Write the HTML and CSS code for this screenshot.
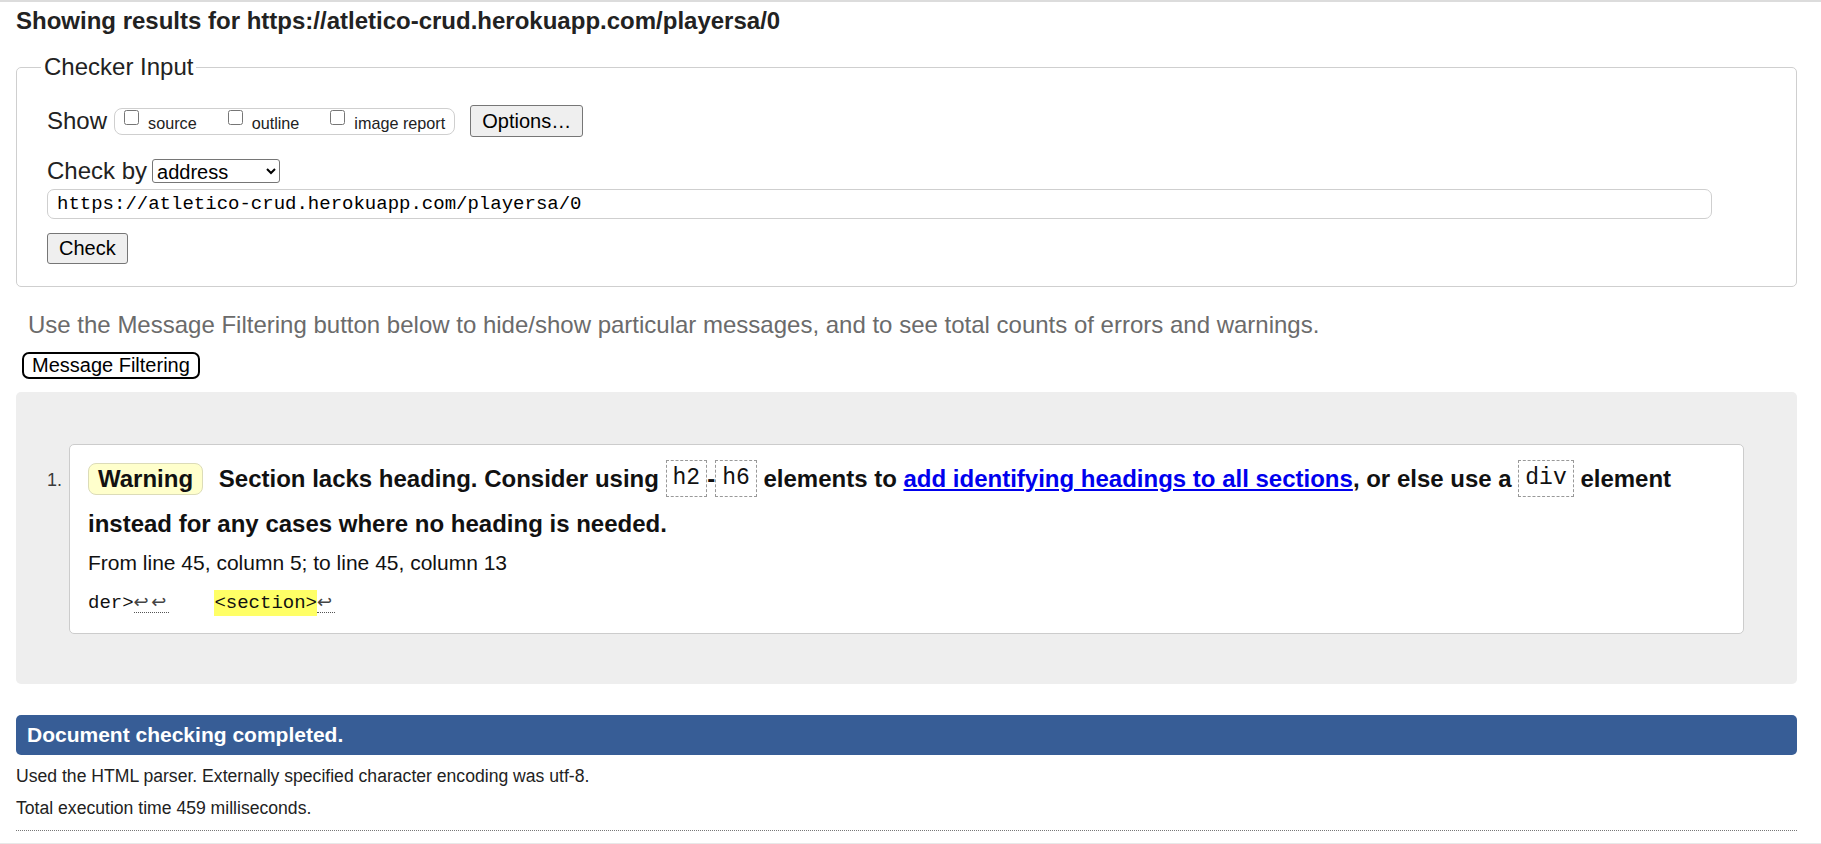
FILE: index.html
```html
<!DOCTYPE html>
<html lang="en">
<head>
<meta charset="utf-8">
<title>Showing results for https://atletico-crud.herokuapp.com/playersa/0 - Nu Html Checker</title>
<link rel="stylesheet" href="styles.css">
</head>
<body>
<div class="topline"></div>
<main class="page">
  <h2 class="results-title">Showing results for https://atletico-crud.herokuapp.com/playersa/0</h2>

  <fieldset class="checker">
    <legend>Checker Input</legend>
    <div class="row show-row">
      <span class="lbl">Show</span>
      <span class="opts">
        <label class="opt"><input type="checkbox"><span>source</span></label>
        <label class="opt"><input type="checkbox"><span>outline</span></label>
        <label class="opt last"><input type="checkbox"><span>image report</span></label>
      </span>
      <button class="btn options" type="button">Options…</button>
    </div>
    <div class="row by-row">
      <span class="lbl">Check by</span>
      <select class="by"><option>address</option></select>
    </div>
    <input class="url" type="text" value="https://atletico-crud.herokuapp.com/playersa/0">
    <button class="btn check" type="button">Check</button>
  </fieldset>

  <p class="hint">Use the Message Filtering button below to hide/show particular messages, and to see total counts of errors and warnings.</p>
  <button class="filter" type="button">Message Filtering</button>

  <div class="results-box">
    <ol class="messages">
      <li class="message">
        <span class="num">1.</span>
        <div class="card">
          <p class="msg"><span class="badge">Warning</span> Section lacks heading. Consider using <code>h2</code>-<code>h6</code> elements to <a href="#">add identifying headings to all sections</a>, or else use a <code>div</code> element instead for any cases where no heading is needed.</p>
          <p class="loc">From line 45, column 5; to line 45, column 13</p>
          <p class="extract"><span>der&gt;</span><span class="lf">↩↩</span>    <mark>&lt;section&gt;</mark><span class="lf">↩</span></p>
        </div>
      </li>
    </ol>
  </div>

  <div class="done">Document checking completed.</div>
  <p class="info">Used the HTML parser. Externally specified character encoding was utf-8.</p>
  <p class="info second">Total execution time 459 milliseconds.</p>
  <div class="dotted"></div>
</main>
<div class="footline"></div>
</body>
</html>
```

FILE: styles.css
```css
* { box-sizing: border-box; }

html, body {
  margin: 0;
  padding: 0;
  background: #fff;
}

body {
  font-family: "Liberation Sans", Arial, sans-serif;
  color: #222;
  overflow: hidden;
}

.topline {
  height: 2px;
  background: #dcdcdc;
}

.page {
  padding: 0 24px 0 16px;
}

.results-title {
  margin: 5px 0 0;
  font-size: 24px;
  line-height: 28px;
  font-weight: bold;
  color: #222;
}

/* Checker input */
.checker {
  margin: 18px 0 0;
  padding: 24px 29px 22px 30px;
  border: 1px solid #cfcfcf;
  border-radius: 5px;
  min-width: 0;
}

.checker legend {
  font-size: 24px;
  line-height: 28px;
  padding: 0 3px;
  margin-left: -6px;
  color: #222;
}

.row {
  display: flex;
  align-items: center;
}

.show-row {
  height: 32px;
}

.by-row {
  height: 26px;
  margin-top: 21px;
}

.lbl {
  font-size: 24px;
  line-height: 28px;
  color: #222;
}

.opts {
  display: flex;
  align-items: flex-start;
  height: 27px;
  margin: 0 15px 0 7px;
  padding: 0 9px 0 9px;
  border: 1px solid #cfcfcf;
  border-radius: 8px;
}

.opt {
  display: flex;
  align-items: flex-start;
  margin-right: 31px;
  font-size: 16.2px;
  color: #222;
}

.opt.last {
  margin-right: 0;
}

.opt input {
  width: 15px;
  height: 15px;
  margin: 1px 9px 0 0;
}

.opt span {
  line-height: 18px;
  margin-top: 5px;
}

.btn {
  font-family: "Liberation Sans", Arial, sans-serif;
  font-size: 20px;
  color: #000;
  background: #efefef;
  border: 1px solid #767676;
  border-radius: 3px;
  padding: 0 11px;
}

.options {
  height: 32px;
}

.by {
  margin-left: 5px;
  width: 128px;
  height: 24px;
  font-family: "Liberation Sans", Arial, sans-serif;
  font-size: 20px;
  color: #000;
  background: #fff;
  border: 1px solid #767676;
  border-radius: 3px;
}

.url {
  display: block;
  margin-top: 5px;
  width: calc(100% - 55px);
  height: 30px;
  padding: 0 9px;
  font-family: "Liberation Mono", "DejaVu Sans Mono", monospace;
  font-size: 19px;
  color: #000;
  border: 1px solid #cfcfcf;
  border-radius: 7px;
}

.check {
  display: block;
  margin-top: 14px;
  height: 31px;
}

/* Hint + filter */
.hint {
  margin: 24px 0 0;
  padding-left: 12px;
  font-size: 24px;
  line-height: 28px;
  color: #6b6b6b;
}

.filter {
  display: block;
  margin: 13px 0 0 6px;
  height: 27px;
  padding: 0 8px;
  font-family: "Liberation Sans", Arial, sans-serif;
  font-size: 20px;
  color: #000;
  background: #fff;
  border: 2px solid #000;
  border-radius: 7px;
}

/* Results */
.results-box {
  margin-top: 13px;
  padding: 52px 53px 50px 31px;
  background: #eee;
  border-radius: 5px;
}

.messages {
  margin: 0;
  padding: 0;
  list-style: none;
}

.message {
  display: flex;
  align-items: flex-start;
}

.num {
  width: 22px;
  flex: none;
  margin-top: 24px;
  font-size: 18px;
  line-height: 24px;
  color: #3a3a3a;
}

.card {
  flex: 1;
  background: #fff;
  border: 1px solid #ccc;
  border-radius: 5px;
  padding: 11px 18px 18px 18px;
}

.msg {
  margin: 0;
  font-size: 24px;
  line-height: 45px;
  font-weight: bold;
  color: #111;
}

.badge {
  display: inline-block;
  vertical-align: middle;
  margin-top: -4px;
  line-height: 28px;
  padding: 1px 9px 1px 9px;
  margin-right: 9px;
  background: #ffffcc;
  border: 1px solid #dcdcb8;
  border-radius: 8px;
}

.msg code {
  display: inline-block;
  vertical-align: middle;
  margin-top: -4px;
  line-height: 25px;
  font-family: "Liberation Mono", "DejaVu Sans Mono", monospace;
  font-size: 23px;
  font-weight: normal;
  padding: 5px 6px;
  border: 1px dashed #999;
}

.msg a {
  color: #0000ee;
  text-decoration: underline;
}

.loc {
  margin: 4px 0 0;
  font-size: 21px;
  line-height: 26px;
  color: #111;
}

.extract {
  margin: 14px 0 0;
  font-family: "Liberation Mono", "DejaVu Sans Mono", monospace;
  font-size: 19px;
  line-height: 24px;
  white-space: pre;
  color: #111;
}

.extract .lf {
  font-family: "DejaVu Sans", sans-serif;
  font-size: 18px;
  letter-spacing: 2.5px;
  color: #444;
  border-bottom: 1px dotted #555;
}

.extract mark {
  background: #ffff66;
  color: #111;
  padding: 2px 0;
}

/* Completion */
.done {
  margin-top: 31px;
  height: 40px;
  padding: 0 11px;
  line-height: 40px;
  font-size: 21px;
  font-weight: bold;
  color: #fff;
  background: #375d96;
  border-radius: 5px;
}

.info {
  margin: 11px 0 0;
  font-size: 17.6px;
  line-height: 20px;
  color: #222;
}

.info.second {
  margin-top: 12px;
}

.dotted {
  margin-top: 12px;
  border-top: 1px dotted #777;
}

.footline {
  margin-top: 12px;
  border-top: 1px solid #e8e8e8;
}
```
